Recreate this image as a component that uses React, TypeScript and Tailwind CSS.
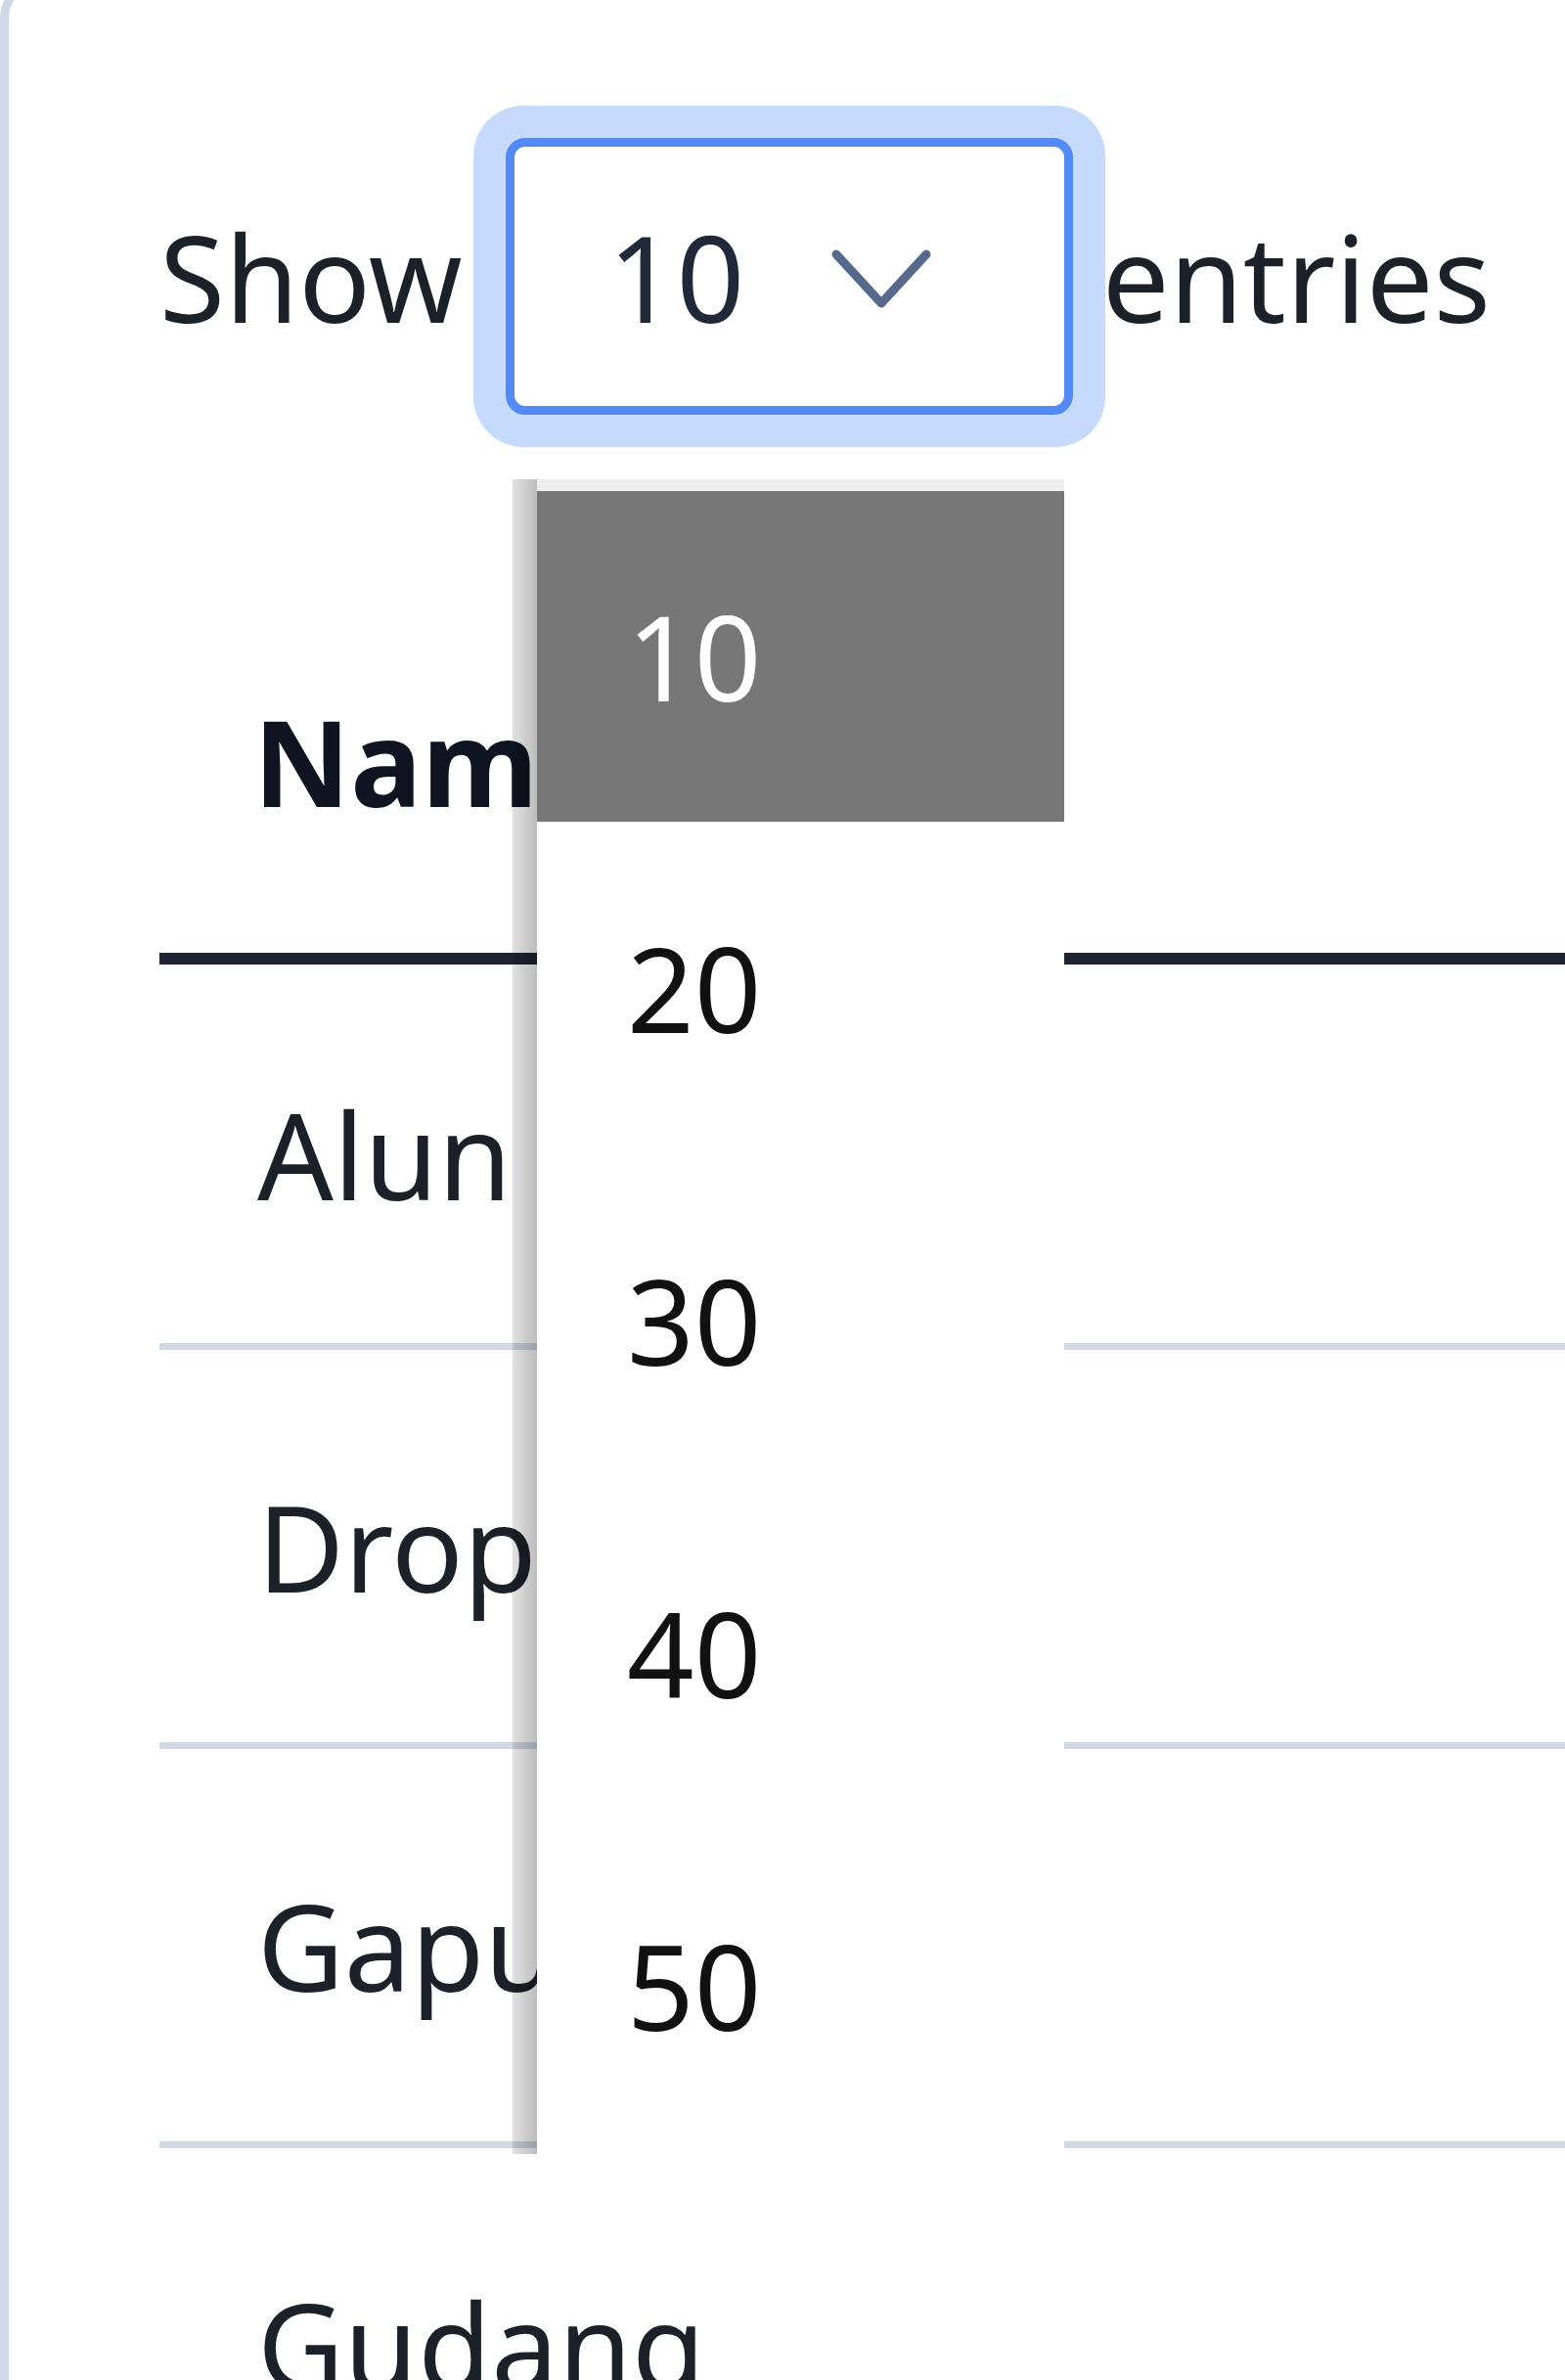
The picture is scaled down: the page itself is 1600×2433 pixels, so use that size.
import React from "react"

const ROWS = [
  { name: "Alun Alun", h: "h-[394px]" },
  { name: "Dropping", h: "h-[408px]" },
  { name: "Gapura", h: "h-[408px]" },
  { name: "Gudang", h: "h-[408px]" },
]

const OPTIONS = [10, 20, 30, 40, 50]

function Chevron() {
  return (
    <svg width="104" height="70" viewBox="0 0 104 70" className="ml-[88px] mt-[8px] shrink-0">
      <polyline
        points="6,8 52,58 98,8"
        fill="none"
        stroke="#56688c"
        strokeWidth="9"
        strokeLinecap="round"
        strokeLinejoin="round"
      />
    </svg>
  )
}

export default function App() {
  return (
    <div className="relative h-[2433px] w-[1600px] overflow-hidden bg-white font-['Noto_Sans',sans-serif] text-[#1c2029]">
      {/* Card */}
      <div className="-mt-[22px] min-h-[2700px] rounded-tl-[40px] border-l-[9px] border-t-[9px] border-[#cfd8e9] pl-[154px] pt-[154px]">
        {/* Show entries */}
        <div className="flex h-[283px] items-center text-[122px] leading-none">
          <span>Show</span>
          <div className="ml-[44px] mr-[30px] flex h-[283px] w-[580px] shrink-0 items-center rounded-[20px] border-[9px] border-[#528bf7] bg-white pl-[96px] text-[#1f2937] shadow-[0_0_0_33px_#c6dafc]">
            <span>10</span>
            <Chevron />
          </div>
          <span>entries</span>
        </div>

        {/* Table */}
        <div className="mt-[158px] w-[1500px] text-[122px] leading-none">
          <div className="flex h-[404px] items-center border-b-[12px] border-[#1e2433] pl-[96px] font-bold text-[#0f1420]">
            Name
          </div>
          {ROWS.map((r) => (
            <div
              key={r.name}
              className={`flex ${r.h} items-center border-b-[7px] border-[#d1d9e6] pl-[100px]`}
            >
              {r.name}
            </div>
          ))}
        </div>
      </div>

      {/* Open select dropdown */}
      <div className="absolute left-[524px] top-[490px] flex h-[1712px] w-[564px]">
        <div className="h-full w-[25px] bg-gradient-to-r from-black/[0.12] to-black/[0.26]" />
        <div className="flex flex-1 flex-col bg-white text-[120px] leading-none text-[#111111]">
          <div className="h-[12px] bg-black/[0.07]" />
          {OPTIONS.map((o, i) => (
            <div
              key={o}
              className={
                i === 0
                  ? "flex h-[338px] items-center bg-[#777777] pl-[92px] text-white"
                  : "flex h-[340px] items-center pl-[92px]"
              }
            >
              {o}
            </div>
          ))}
        </div>
      </div>
    </div>
  )
}
